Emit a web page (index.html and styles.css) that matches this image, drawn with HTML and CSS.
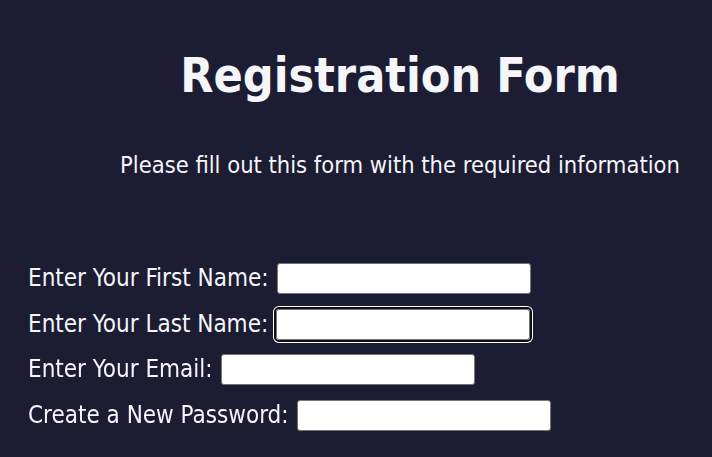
FILE: index.html
```html
<!DOCTYPE html>
<html lang="en">
<head>
<meta charset="utf-8">
<title>Registration Form</title>
<link rel="stylesheet" href="styles.css">
</head>
<body>
<header class="intro">
  <h1 class="title">Registration Form</h1>
  <p class="subtitle">Please fill out this form with the required information</p>
</header>
<form class="form">
  <div class="row">
    <label class="label" for="first">Enter Your First Name:</label>
    <input class="field" id="first" type="text">
  </div>
  <div class="row">
    <label class="label" for="last">Enter Your Last Name:</label>
    <input class="field" id="last" type="text" autofocus>
  </div>
  <div class="row">
    <label class="label" for="email">Enter Your Email:</label>
    <input class="field" id="email" type="email">
  </div>
  <div class="row">
    <label class="label" for="pass">Create a New Password:</label>
    <input class="field" id="pass" type="password">
  </div>
</form>
</body>
</html>
```
FILE: styles.css
```css
html, body {
  margin: 0;
  padding: 0;
  background: #1c1d33;
  color: #f5f6fa;
  font-family: "DejaVu Sans Condensed", "DejaVu Sans", sans-serif;
}

.intro {
  padding-left: 88px;
  text-align: center;
}

.title {
  margin: 0;
  padding-top: 44px;
  font-size: 48px;
  font-weight: bold;
  line-height: 62px;
}

.subtitle {
  margin: 44px 0 0;
  font-size: 23.5px;
  line-height: 30px;
}

.form {
  display: flex;
  flex-direction: column;
  gap: 14.5px;
  padding: 83px 0 0 28px;
}

.row {
  display: flex;
  align-items: center;
  gap: 8px;
}

.label {
  font-size: 24px;
  line-height: 31px;
}

.field {
  box-sizing: border-box;
  width: 254px;
  height: 31px;
  margin: 0;
  border: 1px solid #767676;
  border-radius: 3px;
  background: #fff;
  font-size: 16px;
}

.field:focus {
  outline: 2px solid #101010;
  outline-offset: 0;
  box-shadow: 0 0 0 3px #fff;
}
```
